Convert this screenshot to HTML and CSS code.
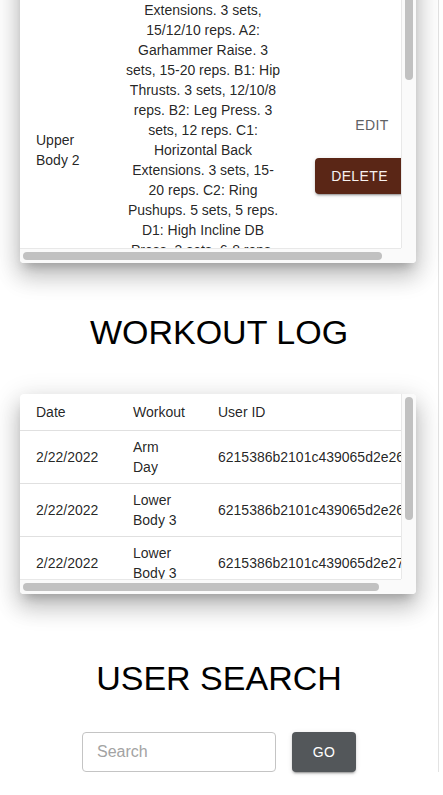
FILE: index.html
```html
<!DOCTYPE html>
<html lang="en">
<head>
<meta charset="utf-8">
<title>Workouts</title>
<link rel="stylesheet" href="styles.css">
</head>
<body>
<div class="page">
  <section class="card card-workouts">
    <div class="viewport">
      <table class="table table-workouts">
        <colgroup>
          <col class="col-name">
          <col class="col-desc">
          <col class="col-actions">
        </colgroup>
        <thead>
          <tr>
            <th>Workout</th>
            <th class="center">Description</th>
            <th></th>
          </tr>
        </thead>
        <tbody>
          <tr>
            <td>Upper Body 2</td>
            <td class="center">A1: Reverse Hyper Extensions. 3 sets, 15/12/10 reps. A2: Garhammer Raise. 3 sets, 15-20 reps. B1: Hip Thrusts. 3 sets, 12/10/8 reps. B2: Leg Press. 3 sets, 12 reps. C1: Horizontal Back Extensions. 3 sets, 15-20 reps. C2: Ring Pushups. 5 sets, 5 reps. D1: High Incline DB Press. 3 sets, 6-8 reps. D2: Face Pulls. 3 sets, 15 reps. E1: Farmer's Carry. 3 sets, 40 yards.</td>
            <td>
              <div class="actions">
                <button class="btn btn-text">Edit</button>
                <button class="btn btn-delete">Delete</button>
              </div>
            </td>
          </tr>
          <tr>
            <td>Lower Body 3</td>
            <td class="center">A1: Back Squat. 5 sets, 5 reps. A2: Hanging Leg Raise. 3 sets, 12 reps. B1: Romanian Deadlift. 3 sets, 8 reps. B2: Walking Lunges. 3 sets, 20 steps.</td>
            <td>
              <div class="actions">
                <button class="btn btn-text">Edit</button>
                <button class="btn btn-delete">Delete</button>
              </div>
            </td>
          </tr>
        </tbody>
      </table>
    </div>
    <div class="vbar"><div class="vthumb vthumb-workouts"></div></div>
    <div class="hbar"><div class="hthumb hthumb-workouts"></div></div>
    <div class="corner"></div>
  </section>

  <h2 class="title title-log">WORKOUT LOG</h2>

  <section class="card card-log">
    <div class="viewport">
      <table class="table table-log">
        <colgroup>
          <col class="col-date">
          <col class="col-workout">
          <col class="col-user">
        </colgroup>
        <thead>
          <tr>
            <th>Date</th>
            <th>Workout</th>
            <th>User ID</th>
          </tr>
        </thead>
        <tbody>
          <tr>
            <td>2/22/2022</td>
            <td>Arm Day</td>
            <td class="nowrap">6215386b2101c439065d2e26</td>
          </tr>
          <tr>
            <td>2/22/2022</td>
            <td>Lower Body 3</td>
            <td class="nowrap">6215386b2101c439065d2e26</td>
          </tr>
          <tr>
            <td>2/22/2022</td>
            <td>Lower Body 3</td>
            <td class="nowrap">6215386b2101c439065d2e27</td>
          </tr>
          <tr>
            <td>2/21/2022</td>
            <td>Full Body Circuit</td>
            <td class="nowrap">6215386b2101c439065d2e27</td>
          </tr>
        </tbody>
      </table>
    </div>
    <div class="vbar"><div class="vthumb vthumb-log"></div></div>
    <div class="hbar"><div class="hthumb hthumb-log"></div></div>
    <div class="corner"></div>
  </section>

  <h2 class="title title-search">USER SEARCH</h2>

  <form class="search" onsubmit="return false;">
    <input class="search-input" type="text" placeholder="Search">
    <button class="go-btn" type="submit">GO</button>
  </form>
</div>
</body>
</html>
```

FILE: styles.css
```css
* {
  box-sizing: border-box;
}

html,
body {
  margin: 0;
  padding: 0;
  height: 100%;
  overflow: hidden;
  background: #ffffff;
}

body {
  font-family: "Liberation Sans", Arial, Helvetica, sans-serif;
  color: rgba(0, 0, 0, 0.87);
}

.page {
  width: 439px;
  min-height: 100%;
  padding: 0 20px;
  border-right: 1px solid #e3e3e3;
}

/* Card with its own (drawn) scrollbars */
.card {
  width: 396px;
  display: grid;
  grid-template-columns: 381px 15px;
  grid-template-rows: auto 15px;
  background: #ffffff;
  border-radius: 4px;
  overflow: hidden;
  box-shadow: 0 8px 10px -5px rgba(0, 0, 0, 0.22),
              0 14px 22px 2px rgba(0, 0, 0, 0.15),
              0 6px 26px 4px rgba(0, 0, 0, 0.12);
}

.card-workouts {
  margin-top: -63px;
}

.viewport {
  overflow: hidden;
}

.card-workouts .viewport {
  height: 311px;
}

.card-log .viewport {
  height: 185px;
}

.vbar {
  background: #fafafa;
  border-left: 1px solid #e8e8e8;
  padding: 3px;
}

.hbar {
  background: #fafafa;
  border-top: 1px solid #e8e8e8;
  padding: 3px;
}

.corner {
  background: #fafafa;
}

.vthumb,
.hthumb {
  background: #c1c1c1;
  border-radius: 5px;
}

.vthumb {
  width: 100%;
}

.hthumb {
  height: 100%;
}

.vthumb-workouts {
  height: 140px;
}

.hthumb-workouts {
  width: 359px;
}

.vthumb-log {
  height: 123px;
}

.hthumb-log {
  width: 356px;
}

/* Tables */
.table {
  width: 400px;
  table-layout: fixed;
  border-collapse: collapse;
  border-spacing: 0;
}

.table th,
.table td {
  padding: 6px 16px;
  border-bottom: 1px solid #e0e0e0;
  font-size: 14px;
  line-height: 20px;
  text-align: left;
  vertical-align: middle;
}

.table th {
  font-weight: 400;
  line-height: 24px;
}

.table .center {
  text-align: center;
}

.table .nowrap {
  white-space: nowrap;
}

.col-name {
  width: 89px;
}

.col-desc {
  width: 188px;
}

.col-actions {
  width: 123px;
}

.col-date {
  width: 97px;
}

.col-workout {
  width: 85px;
}

.col-user {
  width: 218px;
}

.actions {
  display: flex;
  flex-direction: column;
  align-items: flex-end;
  gap: 15px;
}

.btn {
  height: 36px;
  border: 0;
  border-radius: 4px;
  padding: 6px 16px;
  font-family: inherit;
  font-size: 14px;
  line-height: 24px;
  letter-spacing: 0.4px;
  text-transform: uppercase;
  white-space: nowrap;
  cursor: pointer;
}

.btn-text {
  min-width: 64px;
  padding: 6px 8px;
  background: transparent;
  color: #5f6265;
}

.btn-delete {
  background: #5a2616;
  color: #f7f1f0;
  box-shadow: 0 3px 1px -2px rgba(0, 0, 0, 0.2),
              0 2px 2px 0 rgba(0, 0, 0, 0.14),
              0 1px 5px 0 rgba(0, 0, 0, 0.12);
}

/* Headings */
.title {
  font-size: 34px;
  line-height: 42px;
  font-weight: 400;
  text-align: center;
  color: #000000;
}

.title-log {
  margin: 48px 0 41px;
}

.title-search {
  margin: 63px 0 33px;
}

/* Search */
.search {
  display: flex;
  justify-content: center;
  gap: 16px;
  margin: 0;
}

.search-input {
  width: 194px;
  height: 40px;
  margin: 0;
  padding: 0 14px;
  border: 1px solid #c4c4c4;
  border-radius: 4px;
  font-family: inherit;
  font-size: 16px;
  color: rgba(0, 0, 0, 0.87);
  background: #ffffff;
  outline: none;
}

.search-input::placeholder {
  color: #a3a3a3;
}

.go-btn {
  width: 64px;
  height: 40px;
  border: 0;
  border-radius: 4px;
  background: #53575a;
  color: #ffffff;
  font-family: inherit;
  font-size: 14px;
  letter-spacing: 0.4px;
  cursor: pointer;
  box-shadow: 0 3px 1px -2px rgba(0, 0, 0, 0.2),
              0 2px 2px 0 rgba(0, 0, 0, 0.14),
              0 1px 5px 0 rgba(0, 0, 0, 0.12);
}
```
